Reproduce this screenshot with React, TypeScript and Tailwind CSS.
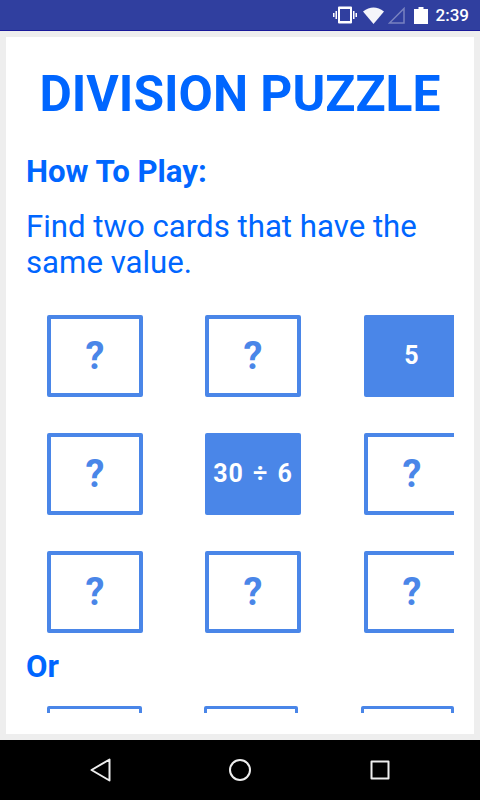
const CARD_ROWS = [
  [{ label: '?' }, { label: '?' }, { label: '5', open: true }],
  [{ label: '?' }, { label: '30 ÷ 6', open: true }, { label: '?' }],
  [{ label: '?' }, { label: '?' }, { label: '?' }],
]

function PuzzleCard({ label, open }: { label: string; open?: boolean }) {
  if (open) {
    return (
      <div className="w-[96px] h-[82px] shrink-0 rounded-[2px] bg-[#4a86e8] flex items-center justify-center text-white font-bold text-[25px] tracking-[1px] [word-spacing:2px]">
        {label}
      </div>
    )
  }
  return (
    <div className="w-[96px] h-[82px] shrink-0 rounded-[2px] border-[4px] border-[#4a86e8] flex items-center justify-center text-[#4a86e8] font-bold text-[38px]">
      {label}
    </div>
  )
}

function StatusBar() {
  return (
    <div className="h-[31px] bg-[#303f9f] border-b border-[#1a1a9a] flex items-center justify-end pr-[11px] text-white shrink-0">
      <svg width="24" height="18" viewBox="0 0 24 18" className="mr-[6px]" fill="white">
        <path fillRule="evenodd" d="M5 1.500Q5 .5 6 .5h12q1 0 1 1v15q0 1-1 1H6q-1 0-1-1zM7 3v12h10V3z" />
        <path d="M2.500 5h1.500v8H2.500zM0 7h1.500v4H0zM20 5h1.500v8H20zM22.500 7H24v4h-1.500z" />
      </svg>
      <svg width="21" height="17" viewBox="0 0 21 17" className="mr-[4px]">
        <path d="M0 4.500Q10.500 -3.500 21 4.500L10.500 17Z" fill="white" opacity="0.95" />
      </svg>
      <svg width="17" height="17" viewBox="0 0 17 17" className="mr-[9px]" fill="none">
        <path d="M16 1.500V16H1.500Z" stroke="white" strokeOpacity="0.35" strokeWidth="1.500" />
      </svg>
      <svg width="14" height="17" viewBox="0 0 14 17" className="mr-[8px]" fill="white">
        <path d="M4.500 0h5v2H14v15H0V2h4.500z" />
      </svg>
      <span className="text-[17px] font-medium leading-none font-['Roboto',sans-serif]">2:39</span>
    </div>
  )
}

function NavBar() {
  return (
    <div className="h-[60px] bg-black shrink-0 flex items-center justify-center">
      <svg width="22" height="24" viewBox="0 0 22 24" className="mr-[117px]" fill="none" stroke="#eeeeee" strokeWidth="2" strokeLinejoin="round">
        <path d="M19.500 1.500V22.500L1.500 12Z" />
      </svg>
      <svg width="22" height="22" viewBox="0 0 22 22" className="mr-[119px]" fill="none" stroke="#eeeeee" strokeWidth="2">
        <circle cx="11" cy="11" r="10" />
      </svg>
      <svg width="20" height="20" viewBox="0 0 20 20" fill="none" stroke="#eeeeee" strokeWidth="2" strokeLinejoin="round">
        <rect x="1.500" y="1.500" width="17" height="17" />
      </svg>
    </div>
  )
}

export default function App() {
  return (
    <div className="w-[480px] h-[800px] flex flex-col overflow-hidden bg-[#eeeeee] font-['Roboto',sans-serif]">
      <StatusBar />
      <div className="flex-1 min-h-0 p-[6px]">
        <div className="h-full bg-white overflow-hidden pt-[24px] pl-[20px]">
          <h1 className="text-center pr-[20px] text-[49.750px] leading-[66px] font-bold text-[#0066ff]">DIVISION PUZZLE</h1>
          <h2 className="mt-[25px] text-[31.200px] leading-[40px] font-bold text-[#0066ff]">How To Play:</h2>
          <p className="mt-[17px] w-[420px] text-[31.200px] leading-[36px] text-[#0066ff]">Find two cards that have the same value.</p>
          <div className="mt-[34px] w-[428px] overflow-hidden pl-[21px] flex flex-col gap-[36px]">
            {CARD_ROWS.map((row, i) => (
              <div key={i} className="flex">
                {row.map((card, j) => (
                  <div key={j} className={j === 2 ? 'ml-[63px]' : j === 1 ? 'ml-[62px]' : ''}>
                    <PuzzleCard label={card.label} open={card.open} />
                  </div>
                ))}
              </div>
            ))}
          </div>
          <h2 className="mt-[14px] text-[31.200px] leading-[40px] font-bold text-[#0066ff]">Or</h2>
          <div className="mt-[19px] h-[7px] w-[428px] overflow-hidden pl-[21px] flex">
            <div className="w-[95px] h-[82px] shrink-0 rounded-[2px] border-[3px] border-[#4a86e8]" />
            <div className="ml-[62px] w-[94px] h-[82px] shrink-0 rounded-[2px] border-[3px] border-[#4a86e8]" />
            <div className="ml-[63px] w-[93px] h-[82px] shrink-0 rounded-[2px] border-[3px] border-[#4a86e8]" />
          </div>
        </div>
      </div>
      <NavBar />
    </div>
  )
}
